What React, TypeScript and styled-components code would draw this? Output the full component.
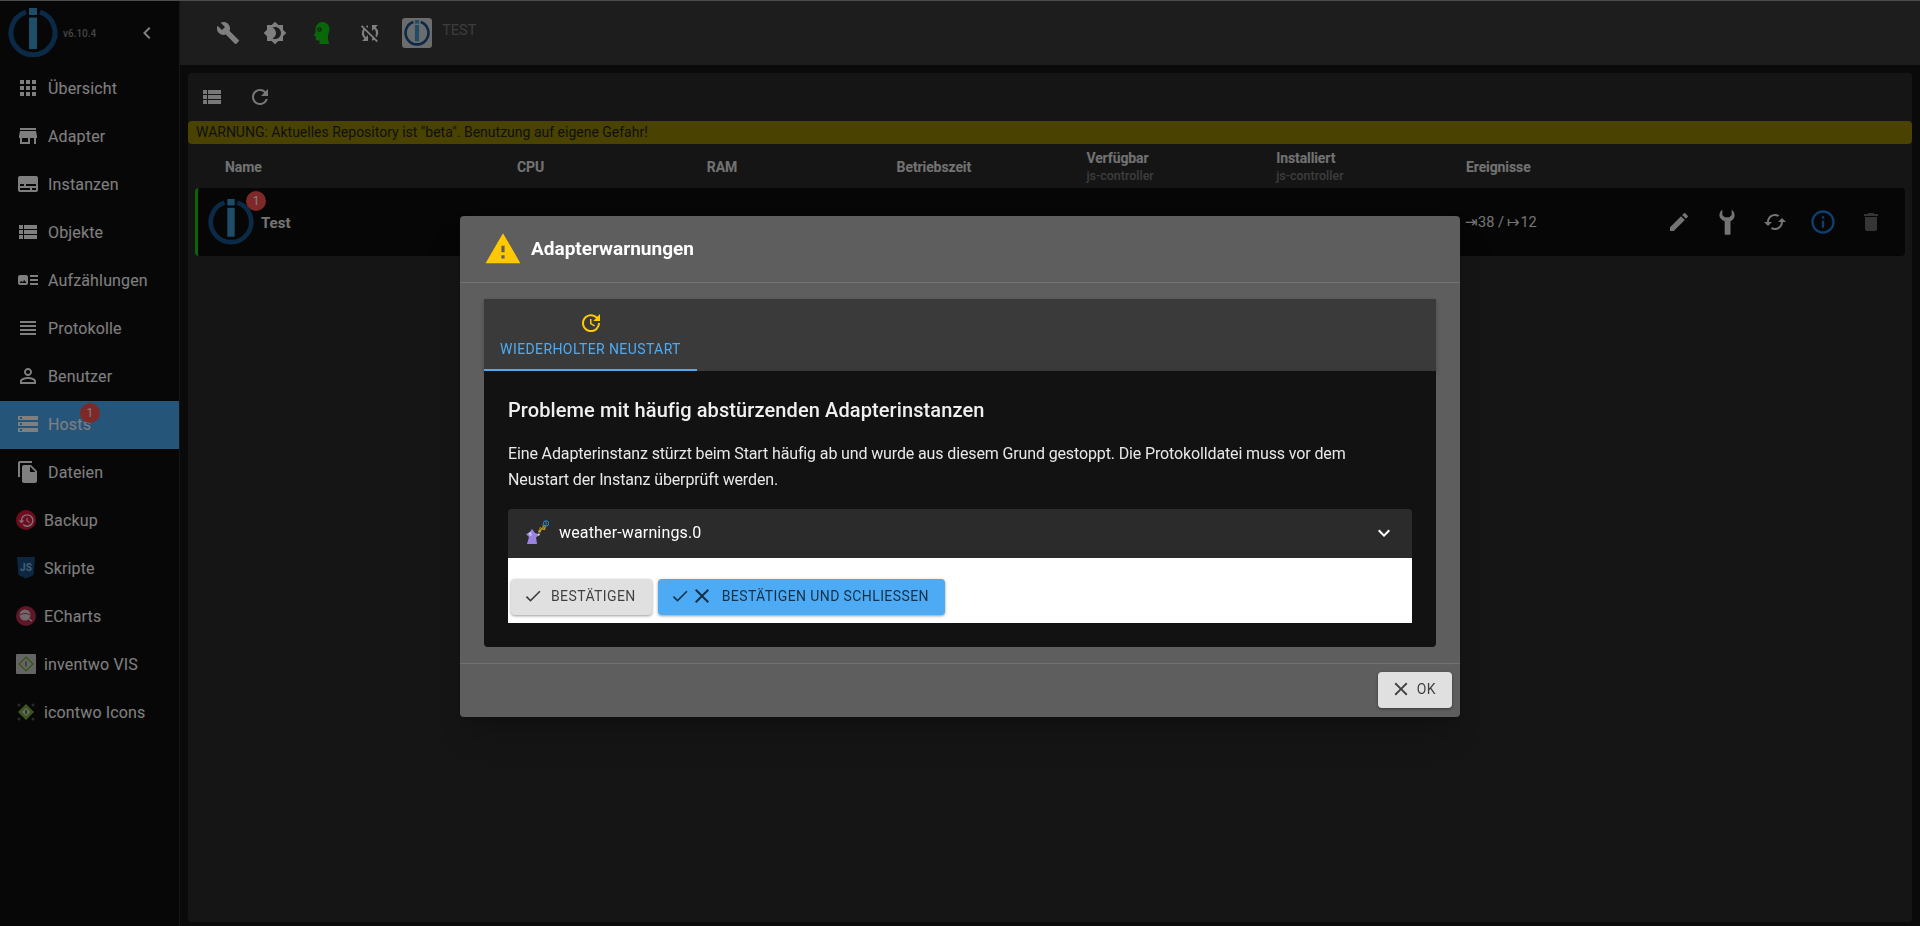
import React from "react";
import styled, { createGlobalStyle } from "styled-components";
import {
  MdApps,
  MdArtTrack,
  MdBrightness4,
  MdBuild,
  MdCached,
  MdCheck,
  MdChevronLeft,
  MdClose,
  MdDelete,
  MdEdit,
  MdExpandMore,
  MdFileCopy,
  MdInfoOutline,
  MdPersonOutline,
  MdRefresh,
  MdRestore,
  MdStorage,
  MdStore,
  MdSubtitles,
  MdSyncDisabled,
  MdUpdate,
  MdViewHeadline,
  MdViewList,
  MdWarning,
} from "react-icons/md";

const GlobalStyle = createGlobalStyle`
  html, body {
    margin: 0;
    height: 100%;
    background: #141414;
    font-family: Roboto, "Liberation Sans", sans-serif;
    overflow: hidden;
  }
  * { box-sizing: border-box; }
`;

const Logo = ({ size }: { size: number }) => (
  <svg width={size} height={size} viewBox="0 0 100 100">
    <path d="M36 8 A44 44 0 1 0 64 8" fill="none" stroke="#17558f" strokeWidth="10" />
    <rect x="42" y="0" width="16" height="14" fill="#3a9ad0" />
    <rect x="42" y="19" width="16" height="63" fill="#3a9ad0" />
  </svg>
);

const HeadIcon = () => (
  <svg width="24" height="24" viewBox="0 0 24 24">
    <path
      d="M12.5 1C16.5 1 19.5 4 19.5 8c0 3-1 4.5-1.5 6-.4 1.5 0 5 1 9H9.5v-3.5H7c-.8 0-1.2-.5-1.2-1.2V15H4.5c-.5 0-.7-.4-.5-.8l1.5-3V8.5C5.5 4 8.5 1 12.5 1Z"
      fill="#12cc12"
    />
    <circle cx="9.5" cy="8.5" r="2.2" fill="#3a3a3a" />
    <circle cx="9.5" cy="8.5" r="0.9" fill="#12cc12" />
  </svg>
);

const WrenchIcon = () => (
  <svg width="28" height="28" viewBox="0 0 24 24" fill="currentColor">
    <path d="M8 1.5V6l2 2h4l2-2V1.5c1.5 1 2.5 2.8 2.5 4.7 0 2.3-1.3 4.2-3.5 5.2V22a1 1 0 0 1-1 1h-3a1 1 0 0 1-1-1V11.4C7.3 10.4 5.5 8.5 5.5 6.2 5.5 4.3 6.5 2.5 8 1.5Z" />
  </svg>
);

const BackupIcon = () => (
  <IconDisc $color="#e0173f">
    <MdRestore size={17} color="#f0f0f0" />
  </IconDisc>
);

const ScriptIcon = () => (
  <svg width="20" height="22" viewBox="0 0 20 22">
    <path d="M1 0h18l-1.5 18L10 21.5 2.5 18Z" fill="#1a4f85" />
    <text x="10" y="14" textAnchor="middle" fontSize="10" fontWeight="700" fontFamily="Roboto, sans-serif" fill="#7fc0ee">
      JS
    </text>
  </svg>
);

const EchartsIcon = () => (
  <IconDisc $color="#b8304f">
    <svg width="16" height="16" viewBox="0 0 16 16">
      <circle cx="7" cy="7" r="5.5" fill="#e0d4d8" />
      <path d="M2 7c3-2 7-2 10 0" stroke="#b8304f" fill="none" strokeWidth="1" />
      <path d="M11 11l3 2" stroke="#e8e8e8" strokeWidth="1.5" />
    </svg>
  </IconDisc>
);

const InventwoIcon = () => (
  <svg width="20" height="20" viewBox="0 0 20 20">
    <rect width="20" height="20" rx="1" fill="#c9c9c9" />
    <path d="M10 3l7 7-7 7-7-7Z" fill="none" stroke="#62a81f" strokeWidth="1.2" />
    <rect x="9.4" y="7.5" width="1.2" height="5" fill="#555" />
  </svg>
);

const IcontwoIcon = () => (
  <svg width="20" height="20" viewBox="0 0 20 20">
    <path d="M10 2l8 8-8 8-8-8Z" fill="#7fae3a" />
    <path d="M10 6l4 4-4 4-4-4Z" fill="#d8d8d8" />
    <rect x="9.3" y="8" width="1.4" height="4" fill="#333" />
    <circle cx="3" cy="3" r="1.5" fill="#555" />
    <circle cx="17" cy="3" r="1.5" fill="#555" />
    <circle cx="3" cy="17" r="1.5" fill="#555" />
    <circle cx="17" cy="17" r="1.5" fill="#555" />
  </svg>
);

const WizardIcon = () => (
  <svg width="25" height="25" viewBox="0 0 25 25">
    <path d="M8 9l3 4 3 1-1 3-1 0 1 7H3l2-7-3-3 3-1Z" fill="#9a83e0" />
    <path d="M4 13l3-1 1 3-2 1Z" fill="#c9bdf0" />
    <path d="M13 15l2-2 1 2-2 1Z" fill="#d8c8f0" />
    <path d="M14 12l2-5 2 1 1-4 3 2-1 4-3 0-2 3Z" fill="#c09a20" />
    <path d="M15 10l5-5M17 11l4-5" stroke="#3a3a20" strokeWidth="0.7" />
    <circle cx="22" cy="3.5" r="2.7" fill="none" stroke="#2f8fd0" strokeWidth="1" />
    <rect x="21.6" y="1.5" width="0.9" height="4" fill="#2f8fd0" />
  </svg>
);

type NavEntry = { label: string; icon: React.ReactNode; plain?: boolean; active?: boolean; badge?: number };

const navItems: NavEntry[] = [
  { label: "Übersicht", icon: <MdApps size={24} /> },
  { label: "Adapter", icon: <MdStore size={24} /> },
  { label: "Instanzen", icon: <MdSubtitles size={24} /> },
  { label: "Objekte", icon: <MdViewList size={24} /> },
  { label: "Aufzählungen", icon: <MdArtTrack size={24} /> },
  { label: "Protokolle", icon: <MdViewHeadline size={24} /> },
  { label: "Benutzer", icon: <MdPersonOutline size={24} /> },
  { label: "Hosts", icon: <MdStorage size={24} />, active: true, badge: 1 },
  { label: "Dateien", icon: <MdFileCopy size={24} /> },
  { label: "Backup", icon: <BackupIcon />, plain: true },
  { label: "Skripte", icon: <ScriptIcon />, plain: true },
  { label: "ECharts", icon: <EchartsIcon />, plain: true },
  { label: "inventwo VIS", icon: <InventwoIcon />, plain: true },
  { label: "icontwo Icons", icon: <IcontwoIcon />, plain: true },
];

const columns = [
  { title: "CPU" },
  { title: "RAM" },
  { title: "Betriebszeit" },
  { title: "Verfügbar", sub: "js-controller" },
  { title: "Installiert", sub: "js-controller" },
  { title: "Ereignisse" },
];

const App: React.FC = () => {
  return (
    <>
      <GlobalStyle />
      <Page>
        <Sidebar>
          <Brand>
            <Logo size={50} />
            <Version>v6.10.4</Version>
            <Collapse>
              <MdChevronLeft size={24} />
            </Collapse>
          </Brand>
          {navItems.map((item) => (
            <NavItem key={item.label} $active={item.active}>
              <NavIcon $plain={item.plain}>{item.icon}</NavIcon>
              <NavLabel>
                {item.label}
                {item.badge && <NavBadge>{item.badge}</NavBadge>}
              </NavLabel>
            </NavItem>
          ))}
        </Sidebar>
        <Main>
          <TopBar>
            <TopIcon>
              <MdBuild size={24} />
            </TopIcon>
            <TopIcon>
              <MdBrightness4 size={24} />
            </TopIcon>
            <TopIcon>
              <HeadIcon />
            </TopIcon>
            <TopIcon>
              <MdSyncDisabled size={24} />
            </TopIcon>
            <HostLogo>
              <Logo size={26} />
            </HostLogo>
            <HostName>TEST</HostName>
          </TopBar>
          <Content>
            <Panel>
              <Toolbar>
                <ToolIcon>
                  <MdViewList size={24} />
                </ToolIcon>
                <ToolIcon>
                  <MdRefresh size={24} />
                </ToolIcon>
              </Toolbar>
              <WarningBar>WARNUNG: Aktuelles Repository ist "beta". Benutzung auf eigene Gefahr!</WarningBar>
              <TableHead>
                <HeadCell>Name</HeadCell>
                {columns.map((col) => (
                  <HeadCell key={col.title}>
                    {col.title}
                    {col.sub && <HeadSub>{col.sub}</HeadSub>}
                  </HeadCell>
                ))}
              </TableHead>
              <HostRow>
                <HostTitle>
                  <RowLogo>
                    <Logo size={46} />
                    <RowBadge>1</RowBadge>
                  </RowLogo>
                  Test
                </HostTitle>
                <RowCell />
                <RowCell />
                <RowCell>1d. 2h</RowCell>
                <RowCell />
                <RowCell />
                <RowCell>⇥38 / ↦12</RowCell>
                <RowActions>
                  <ActionIcon>
                    <MdEdit size={24} />
                  </ActionIcon>
                  <ActionIcon>
                    <WrenchIcon />
                  </ActionIcon>
                  <ActionIcon>
                    <MdCached size={24} />
                  </ActionIcon>
                  <ActionIcon $color="#1f7fe0">
                    <MdInfoOutline size={28} />
                  </ActionIcon>
                  <ActionIcon $color="#6a6a6a">
                    <MdDelete size={24} />
                  </ActionIcon>
                </RowActions>
              </HostRow>
            </Panel>
          </Content>
        </Main>
      </Page>
      <Backdrop>
        <Dialog>
          <DialogHeader>
            <MdWarning size={38} color="#ffc800" />
            <DialogTitle>Adapterwarnungen</DialogTitle>
          </DialogHeader>
          <DialogBody>
            <TabBar>
              <Tab>
                <MdUpdate size={24} color="#ffc800" />
                Wiederholter Neustart
              </Tab>
            </TabBar>
            <TabPanel>
              <Heading>Probleme mit häufig abstürzenden Adapterinstanzen</Heading>
              <Description>
                Eine Adapterinstanz stürzt beim Start häufig ab und wurde aus diesem Grund gestoppt. Die Protokolldatei
                muss vor dem Neustart der Instanz überprüft werden.
              </Description>
              <Accordion>
                <AccordionHead>
                  <WizardIcon />
                  <AccordionLabel>weather-warnings.0</AccordionLabel>
                  <MdExpandMore size={24} color="#fff" />
                </AccordionHead>
                <AccordionActions>
                  <Button>
                    <MdCheck size={20} />
                    Bestätigen
                  </Button>
                  <Button $primary>
                    <IconPair>
                      <MdCheck size={20} />
                      <MdClose size={24} />
                    </IconPair>
                    Bestätigen und schliessen
                  </Button>
                </AccordionActions>
              </Accordion>
            </TabPanel>
          </DialogBody>
          <DialogFooter>
            <OkButton>
              <MdClose size={22} />
              OK
            </OkButton>
          </DialogFooter>
        </Dialog>
      </Backdrop>
    </>
  );
};

export default App;

const Page = styled.div`
  display: flex;
  height: 926px;
  border-top: 1px solid #9a9a9a;
`;

const Sidebar = styled.nav`
  width: 180px;
  flex: none;
  background: #0f0f0f;
  border-right: 1px solid #2a2a2a;
`;

const Brand = styled.div`
  display: flex;
  align-items: center;
  height: 64px;
  padding-left: 8px;
  gap: 5px;
`;

const Version = styled.span`
  font-size: 10px;
  font-weight: 500;
  color: #8a8a8a;
`;

const Collapse = styled.span`
  display: flex;
  margin-left: 34px;
  color: #fff;
`;

const NavItem = styled.div<{ $active?: boolean }>`
  display: flex;
  align-items: center;
  height: 48px;
  padding-bottom: 2px;
  background: ${(p) => (p.$active ? "#4dabf5" : "transparent")};
  color: #fff;
  font-size: 16px;
  letter-spacing: 0.15px;
`;

const NavIcon = styled.span<{ $plain?: boolean }>`
  display: flex;
  align-items: center;
  justify-content: center;
  flex: none;
  width: ${(p) => (p.$plain ? "20px" : "24px")};
  margin-left: 16px;
  margin-right: 8px;
`;

const NavLabel = styled.span`
  position: relative;
`;

const NavBadge = styled.span`
  position: absolute;
  top: -12px;
  left: 32px;
  display: flex;
  align-items: center;
  justify-content: center;
  width: 20px;
  height: 20px;
  border-radius: 50%;
  background: #ff5050;
  color: #fff;
  font-size: 12px;
`;

const IconDisc = styled.span<{ $color: string }>`
  display: flex;
  align-items: center;
  justify-content: center;
  width: 20px;
  height: 20px;
  border-radius: 50%;
  background: ${(p) => p.$color};
`;

const Main = styled.div`
  flex: 1;
  min-width: 0;
  display: flex;
  flex-direction: column;
`;

const TopBar = styled.header`
  display: flex;
  align-items: center;
  height: 64px;
  flex: none;
  padding-left: 24px;
  background: #3a3a3a;
  color: #fff;
`;

const TopIcon = styled.span`
  display: flex;
  align-items: center;
  justify-content: center;
  width: 47.3px;
`;

const HostLogo = styled.span`
  display: flex;
  align-items: center;
  justify-content: center;
  width: 30px;
  height: 30px;
  margin-left: 9px;
  border-radius: 3px;
  background: #d8d8d8;
`;

const HostName = styled.span`
  align-self: flex-start;
  margin: 21px 0 0 10px;
  font-size: 14.5px;
  color: #7a7a7a;
`;

const Content = styled.main`
  flex: 1;
  padding: 8px 8px 4px;
  min-height: 0;
`;

const Panel = styled.section`
  height: 100%;
  border-radius: 4px;
  background: #2b2b2b;
`;

const Toolbar = styled.div`
  display: flex;
  align-items: center;
  height: 48px;
  padding-left: 12px;
  gap: 24px;
`;

const ToolIcon = styled.span`
  display: flex;
  color: #f0f0f0;
`;

const WarningBar = styled.div`
  height: 23px;
  padding-left: 8px;
  border-radius: 4px;
  background: #948400;
  color: #222;
  font-size: 14px;
  line-height: 23px;
`;

const TableHead = styled.div`
  display: grid;
  grid-template-columns: 292px repeat(6, 189.8px);
  align-items: center;
  height: 44px;
  padding: 1px 0 0 37px;
`;

const HeadCell = styled.div`
  font-size: 14px;
  font-weight: 700;
  line-height: 18px;
  letter-spacing: -0.1px;
  color: #e4e4e4;
`;

const HeadSub = styled.div`
  font-size: 12.5px;
  font-weight: 500;
  letter-spacing: 0;
  color: #7a7a7a;
`;

const HostRow = styled.div`
  display: grid;
  grid-template-columns: 317px repeat(6, 190px) 1fr;
  align-items: center;
  height: 68px;
  margin: 0 7px;
  border-left: 3px solid #14c814;
  border-radius: 4px;
  background: #0c0c0c;
  color: #e8e8e8;
  font-size: 14px;
`;

const HostTitle = styled.div`
  display: flex;
  align-items: center;
  padding: 2px 0 0 10px;
  gap: 7px;
  font-size: 15px;
  font-weight: 700;
`;

const RowLogo = styled.span`
  position: relative;
  display: flex;
  margin-top: -2px;
`;

const RowBadge = styled.span`
  position: absolute;
  top: -8px;
  right: -12px;
  display: flex;
  align-items: center;
  justify-content: center;
  width: 20px;
  height: 20px;
  border-radius: 50%;
  background: #ff5050;
  color: #fff;
  font-size: 12px;
  font-weight: 400;
`;

const RowCell = styled.div`
  font-size: 14.5px;
`;

const RowActions = styled.div`
  display: flex;
  justify-content: flex-end;
  padding-right: 15px;
`;

const ActionIcon = styled.span<{ $color?: string }>`
  display: flex;
  align-items: center;
  justify-content: center;
  width: 48px;
  color: ${(p) => p.$color ?? "#e8e8e8"};
`;

const Backdrop = styled.div`
  position: fixed;
  inset: 0;
  display: flex;
  justify-content: center;
  align-items: center;
  padding-top: 7px;
  background: rgba(0, 0, 0, 0.5);
`;

const Dialog = styled.div`
  width: 1000px;
  border-radius: 4px;
  background: #5e5e5e;
  box-shadow: 0 11px 15px -7px rgba(0, 0, 0, 0.2), 0 24px 38px 3px rgba(0, 0, 0, 0.14);
  color: #fff;
`;

const DialogHeader = styled.div`
  display: flex;
  align-items: center;
  gap: 9px;
  height: 67px;
  padding-left: 24px;
  border-bottom: 1px solid #727272;
`;

const DialogTitle = styled.h2`
  margin: 0;
  font-size: 19px;
  font-weight: 700;
`;

const DialogBody = styled.div`
  padding: 16px 24px;
`;

const TabBar = styled.div`
  height: 72px;
  background: #3a3a3a;
  box-shadow: 0 2px 4px rgba(0, 0, 0, 0.25);
`;

const Tab = styled.div`
  display: flex;
  flex-direction: column;
  align-items: center;
  gap: 6px;
  width: 213px;
  height: 72px;
  padding-top: 12px;
  border-bottom: 2px solid #4dabf5;
  color: #4dabf5;
  font-size: 14px;
  letter-spacing: 0.4px;
  text-transform: uppercase;
`;

const TabPanel = styled.div`
  padding: 24px;
  border-radius: 0 0 4px 4px;
  background: #121212;
`;

const Heading = styled.h3`
  margin: 0;
  font-size: 20px;
  font-weight: 500;
  line-height: 30px;
  letter-spacing: 0.1px;
  color: #f0f0f0;
`;

const Description = styled.p`
  max-width: 870px;
  margin: 16px 0 0;
  font-size: 16px;
  line-height: 25.6px;
  letter-spacing: -0.13px;
  color: #e8e8e8;
`;

const Accordion = styled.div`
  margin-top: 17px;
`;

const AccordionHead = styled.div`
  display: flex;
  align-items: center;
  height: 49px;
  padding: 0 16px 2px;
  gap: 10px;
  border-radius: 4px 4px 0 0;
  background: #2b2b2b;
`;

const AccordionLabel = styled.span`
  flex: 1;
  font-size: 16px;
  letter-spacing: 0.15px;
`;

const AccordionActions = styled.div`
  display: flex;
  align-items: flex-start;
  gap: 6px;
  height: 65px;
  padding: 21px 0 0 3px;
  background: #fff;
`;

const Button = styled.button<{ $primary?: boolean }>`
  display: inline-flex;
  align-items: center;
  height: 36px;
  padding: 0 16px 2px 12px;
  gap: 8px;
  border: none;
  border-radius: 4px;
  background: ${(p) => (p.$primary ? "#4dabf5" : "#e0e0e0")};
  box-shadow: 0 1px 3px rgba(0, 0, 0, 0.4);
  color: rgba(0, 0, 0, 0.72);
  font-family: inherit;
  font-size: 14px;
  letter-spacing: 0.4px;
  text-transform: uppercase;
`;

const OkButton = styled(Button)`
  gap: 5px;
`;

const IconPair = styled.span`
  display: flex;
  align-items: center;
`;

const DialogFooter = styled.div`
  display: flex;
  justify-content: flex-end;
  height: 54px;
  padding: 8px;
  border-top: 1px solid #727272;
`;
